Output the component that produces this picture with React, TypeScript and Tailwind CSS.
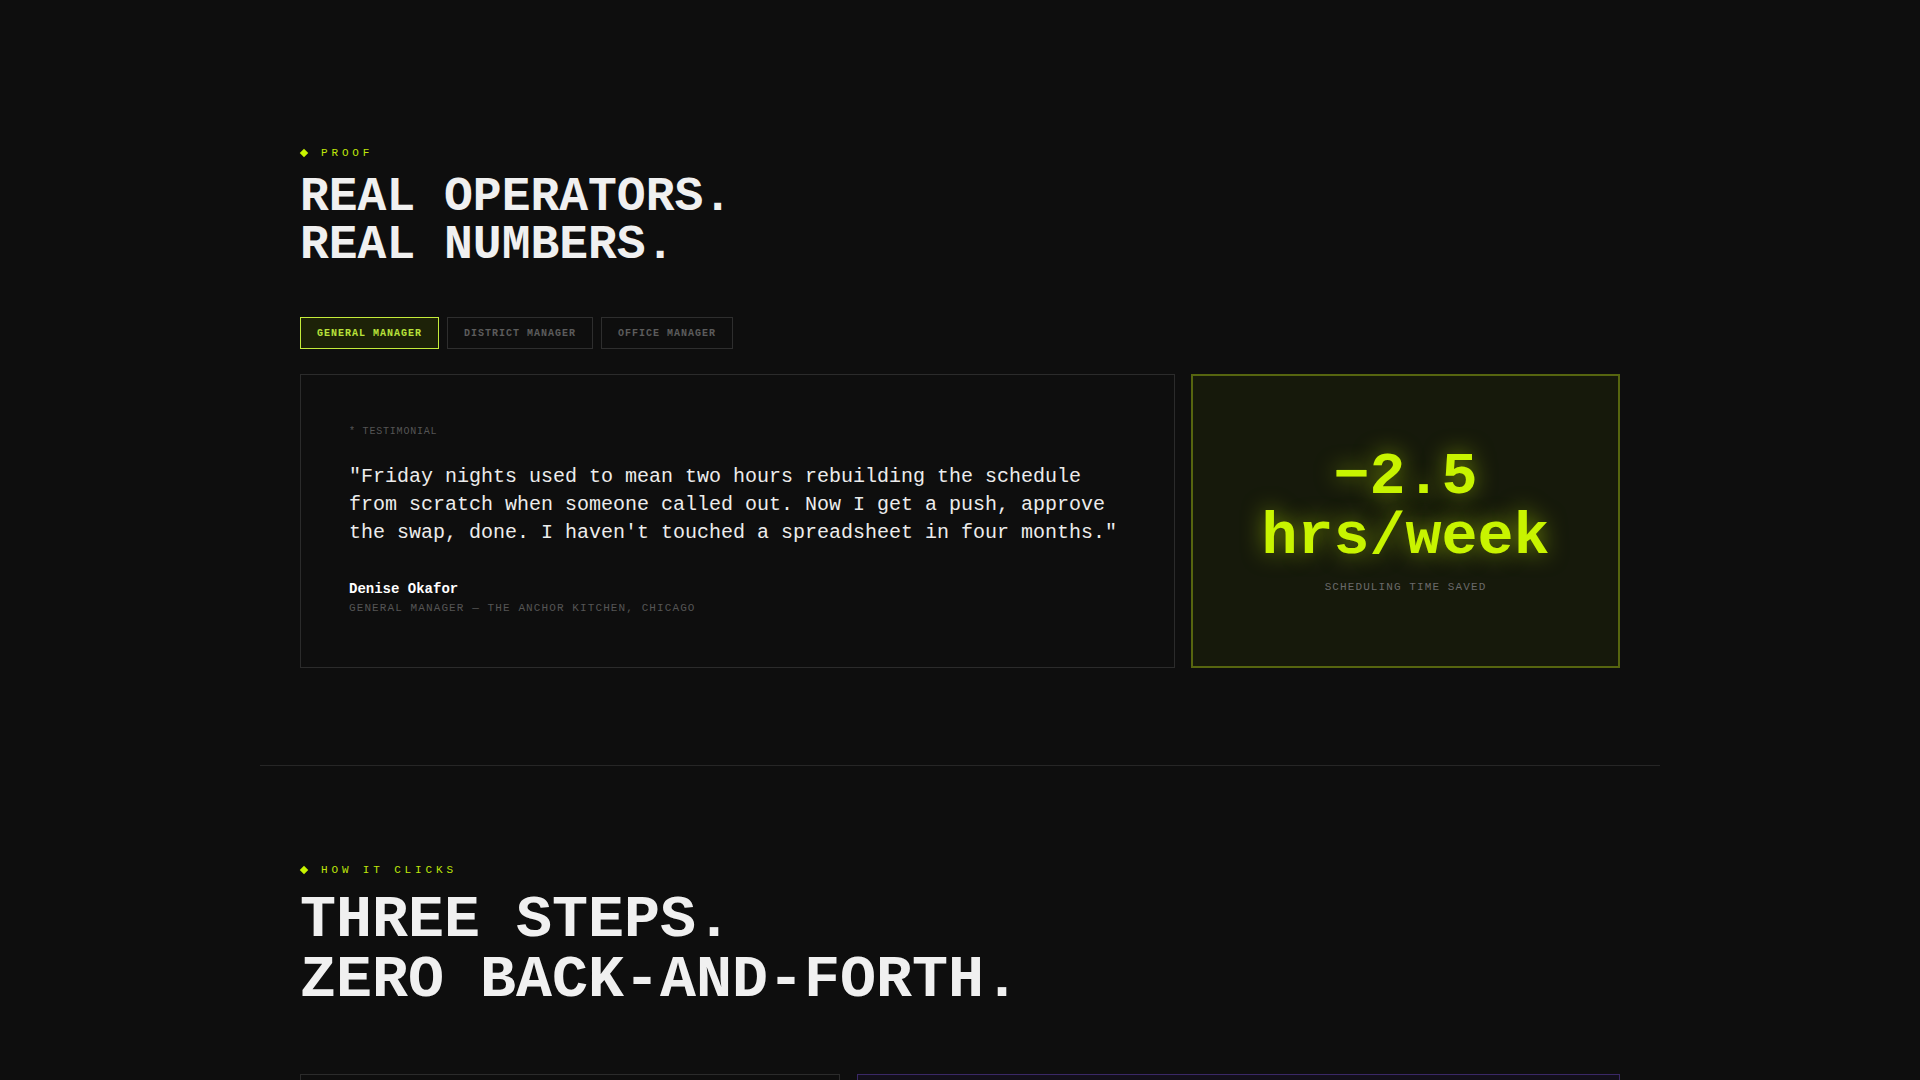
import React from "react";

const roles = ["General Manager", "District Manager", "Office Manager"];

function Eyebrow({ children }: { children: React.ReactNode }) {
  return (
    <div className="flex items-center gap-[14px] text-[11px] uppercase leading-4 tracking-[0.35em] text-[#bfe60a]">
      <span className="ml-px h-1.5 w-1.5 rotate-45 bg-[#c8f400]" />
      {children}
    </div>
  );
}

export default function App() {
  return (
    <div className="min-h-screen bg-[#0e0e0e] font-['Liberation_Mono',monospace] text-[#f0f0f0]">
      <div className="mx-auto max-w-[1400px]">
        {/* proof */}
        <section className="px-10 pt-[145px] pb-[97px]">
          <Eyebrow>Proof</Eyebrow>
          <h2 className="mt-3 text-[48px] font-bold uppercase leading-none">
            Real operators.
            <br />
            Real numbers.
          </h2>

          <div className="mt-12 flex gap-2">
            {roles.map((role, i) => (
              <button
                key={role}
                className={
                  i === 0
                    ? "flex h-8 items-center border border-[#c4ec3a] bg-[#1d2208] px-4 text-[10px] font-bold uppercase tracking-[0.1em] text-[#b9e23a]"
                    : "flex h-8 items-center border border-[#2e2e2e] px-4 text-[10px] font-bold uppercase tracking-[0.1em] text-[#5c5c5c]"
                }
              >
                {role}
              </button>
            ))}
          </div>

          <div className="mt-[25px] grid grid-cols-[1fr_429px] gap-4">
            <div className="border border-[#2b2b2b] px-12 pt-[50px] pb-[51px]">
              <div className="text-[10px] uppercase leading-[14px] tracking-[0.08em] text-[#555]">
                * Testimonial
              </div>
              <p className="mt-6 text-[20px] leading-7 text-[#ececec]">
                "Friday nights used to mean two hours rebuilding the schedule from scratch when someone called out. Now I get a push, approve the swap, done. I haven't touched a spreadsheet in four months."
              </p>
              <div className="mt-8 text-[14px] font-bold leading-5 text-white">Denise Okafor</div>
              <div className="mt-px text-[11px] uppercase leading-4 tracking-[0.1em] text-[#555]">
                General Manager — The Anchor Kitchen, Chicago
              </div>
            </div>

            <div className="flex flex-col items-center justify-center border-2 border-[#56650f] bg-[#16190b] text-center">
              <div className="text-[60px] font-bold leading-none text-[#c8f400] [text-shadow:0_0_22px_rgba(200,244,0,0.55)]">
                −2.5
                <br />
                hrs/week
              </div>
              <div className="mt-3 text-[11px] uppercase leading-4 tracking-[0.1em] text-[#6a6a6a]">
                Scheduling time saved
              </div>
            </div>
          </div>
        </section>

        {/* how it works */}
        <section className="border-t border-[#262626] px-10 pt-24">
          <Eyebrow>How it clicks</Eyebrow>
          <h2 className="mt-3 text-[60px] font-bold uppercase leading-none">
            Three steps.
            <br />
            Zero back-and-forth.
          </h2>

          <div className="mt-16 grid grid-cols-[540px_1fr] gap-[17px]">
            <div className="h-40 border border-[#2b2b2b]" />
            <div className="h-40 border border-[#3a2866] bg-[#120f1a]" />
          </div>
        </section>
      </div>
    </div>
  );
}
